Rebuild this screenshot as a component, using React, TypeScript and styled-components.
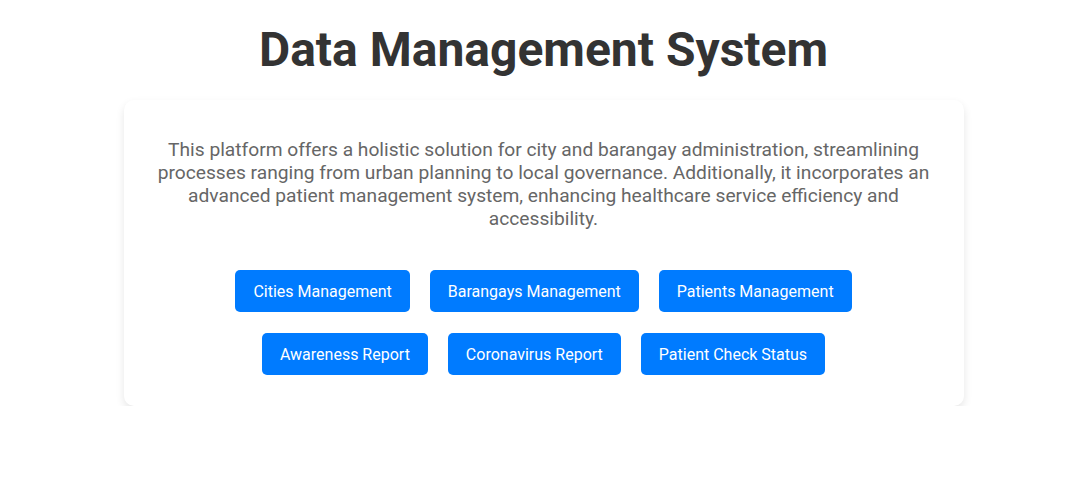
import React from "react";
import styled, { createGlobalStyle } from "styled-components";

const Global = createGlobalStyle`
  html, body { margin: 0; padding: 0; background: #fff; }
  body { font-family: Roboto, "Liberation Sans", sans-serif; }
`;

const Page = styled.div`
  display: flex;
  flex-direction: column;
  align-items: center;
  padding: 22px 4px 0 0;
`;

const Title = styled.h1`
  margin: 0 0 22px;
  font-size: 48px;
  font-weight: 700;
  line-height: 56px;
  color: #333;
`;

const Card = styled.div`
  width: 840px;
  box-sizing: border-box;
  padding: 38px 30px 31px;
  background: #fff;
  border-radius: 10px;
  box-shadow: 0 4px 8px rgba(0, 0, 0, 0.1);
  display: flex;
  flex-direction: column;
  align-items: center;
`;

const Text = styled.p`
  margin: 0;
  font-size: 19.2px;
  line-height: 23px;
  color: #666;
  text-align: center;
`;

const Buttons = styled.div`
  margin-top: 40px;
  display: flex;
  flex-direction: column;
  align-items: center;
  gap: 21px;
`;

const Row = styled.div`
  display: flex;
  gap: 20px;
  justify-content: center;
`;

const Button = styled.button`
  height: 42px;
  padding: 0 18px;
  border: none;
  border-radius: 5px;
  background: #007bff;
  color: #fff;
  font-family: Roboto, "Liberation Sans", sans-serif;
  font-size: 16px;
  cursor: pointer;
`;

const rows = [
  ["Cities Management", "Barangays Management", "Patients Management"],
  ["Awareness Report", "Coronavirus Report", "Patient Check Status"],
];

export default function App() {
  return (
    <>
      <Global />
      <Page>
        <Title>Data Management System</Title>
        <Card>
          <Text>
            This platform offers a holistic solution for city and barangay administration, streamlining
            processes ranging from urban planning to local governance. Additionally, it incorporates an
            advanced patient management system, enhancing healthcare service efficiency and accessibility.
          </Text>
          <Buttons>
            {rows.map((r, i) => (
              <Row key={i}>
                {r.map((b) => (
                  <Button key={b}>{b}</Button>
                ))}
              </Row>
            ))}
          </Buttons>
        </Card>
      </Page>
    </>
  );
}
